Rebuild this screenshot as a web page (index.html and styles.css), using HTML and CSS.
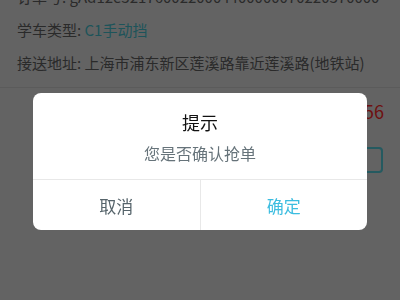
FILE: index.html
```html
<!DOCTYPE html>
<html lang="zh">
<head>
<meta charset="utf-8">
<link rel="stylesheet" href="styles.css">
</head>
<body>
<div class="page">
  <div class="info">
    <div class="row">订单号: gAd12e3217600220004400000070220370000</div>
    <div class="row">学车类型: <span class="teal">C1手动挡</span></div>
    <div class="row">接送地址: 上海市浦东新区莲溪路靠近莲溪路(地铁站)</div>
  </div>
  <div class="price-row"><span class="price">¥156</span></div>
  <div class="btn-row"><span class="grab-btn">抢单</span></div>
</div>
<div class="dialog">
  <div class="title">提示</div>
  <div class="msg">您是否确认抢单</div>
  <div class="actions">
    <div class="act cancel">取消</div>
    <div class="act ok">确定</div>
  </div>
</div>
</body>
</html>
```
FILE: styles.css
```css
html, body {
  margin: 0;
  padding: 0;
  background: #636363;
  width: 400px;
  height: 300px;
  overflow: hidden;
  font-family: "Noto Sans CJK SC", "Noto Sans", sans-serif;
}
.page {
  display: flex;
  flex-direction: column;
}
.info {
  margin-top: -20px;
  padding: 0 0 8px 17px;
  border-bottom: 1px solid #5b5b5b;
}
.row {
  font-size: 15px;
  line-height: 33px;
  color: #2a2a2a;
  white-space: nowrap;
}
.teal {
  color: #1d545a;
}
.price-row {
  display: flex;
  justify-content: flex-end;
  padding: 10px 16px 0 0;
  height: 26px;
}
.price {
  font-size: 18px;
  line-height: 26px;
  color: #6e1010;
}
.btn-row {
  display: flex;
  justify-content: flex-end;
  padding: 23px 17px 0 0;
}
.grab-btn {
  width: 80px;
  height: 22px;
  border: 2px solid #255a60;
  border-radius: 4px;
  font-size: 14px;
  line-height: 22px;
  text-align: center;
  color: #255a60;
}
.dialog {
  position: fixed;
  left: 33px;
  top: 93px;
  width: 334px;
  height: 137px;
  background: #ffffff;
  border-radius: 8px;
  display: flex;
  flex-direction: column;
  overflow: hidden;
}
.title {
  padding-top: 18px;
  font-size: 18px;
  line-height: 22px;
  text-align: center;
  color: #111111;
}
.msg {
  margin-top: 9px;
  padding-bottom: 15px;
  font-size: 16px;
  line-height: 22px;
  text-align: center;
  color: #66737a;
  border-bottom: 1px solid #e8e8e8;
}
.actions {
  flex: 1;
  display: flex;
}
.act {
  flex: 1;
  display: flex;
  align-items: center;
  justify-content: center;
  font-size: 17px;
}
.cancel {
  color: #56646b;
  border-right: 1px solid #e8e8e8;
}
.ok {
  color: #3cbde0;
}
```
